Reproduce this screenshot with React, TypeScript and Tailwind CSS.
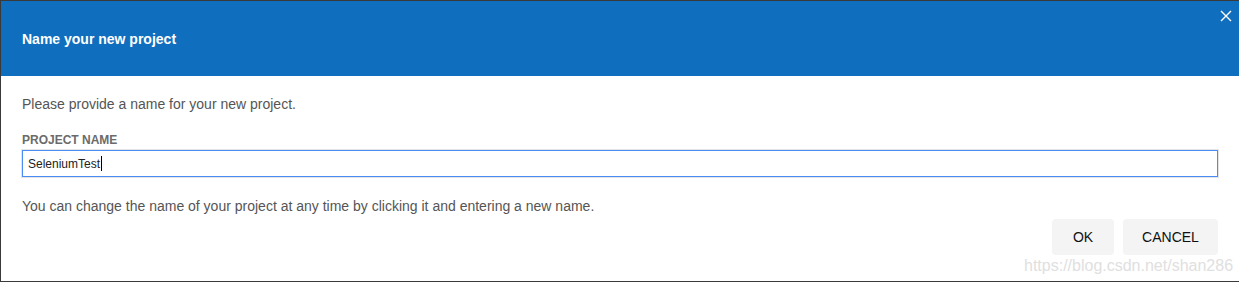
import React from "react";

const App: React.FC = () => {
  return (
    <div
      className="relative w-[1239px] h-[282px] bg-white border-l border-t border-b border-[#3a3a3a] overflow-hidden"
      style={{ fontFamily: '"Liberation Sans", Arial, sans-serif' }}
    >
      {/* header */}
      <div className="relative h-[75px] bg-[#106ebe] flex items-center px-[21px]">
        <h2 className="text-[14px] font-bold text-white mt-[1px]">Name your new project</h2>
        <button className="absolute right-[6px] top-[8px] w-[14px] h-[14px] flex items-center justify-center">
          <svg width="12" height="12" viewBox="0 0 12 12">
            <path d="M1 1 L11 11 M11 1 L1 11" stroke="white" strokeWidth="1.4" />
          </svg>
        </button>
      </div>

      {/* body */}
      <div className="px-[21px] pt-[20px]">
        <p className="text-[14px] leading-[16px] text-[#555555]">
          Please provide a name for your new project.
        </p>
        <label className="block mt-[21px] mb-[3px] text-[12px] leading-[14px] font-bold text-[#6b6b6b]">
          PROJECT NAME
        </label>
        <div className="h-[27px] border border-[#4a8ef5] shadow-[0_0_0_1px_#e4e4e4] flex items-center pl-[5px] text-[12px] text-[#222]">
          SeleniumTest
          <span className="ml-[1px] w-px h-[15px] bg-black" />
        </div>
        <p className="mt-[21px] text-[14px] leading-[16px] text-[#555555]">
          You can change the name of your project at any time by clicking it and entering a new name.
        </p>
        <div className="mt-[5px] flex justify-end gap-[9px]">
          <button className="w-[62px] h-[36px] rounded-[4px] bg-[#f4f4f4] text-[14px] text-[#111]">OK</button>
          <button className="w-[95px] h-[36px] rounded-[4px] bg-[#f4f4f4] text-[14px] text-[#111]">CANCEL</button>
        </div>
      </div>

      <span className="absolute left-[1023px] top-[253px] text-[16px] text-[#e0e0e0] pointer-events-none">
        https://blog.csdn.net/shan286
      </span>
    </div>
  );
};

export default App;
